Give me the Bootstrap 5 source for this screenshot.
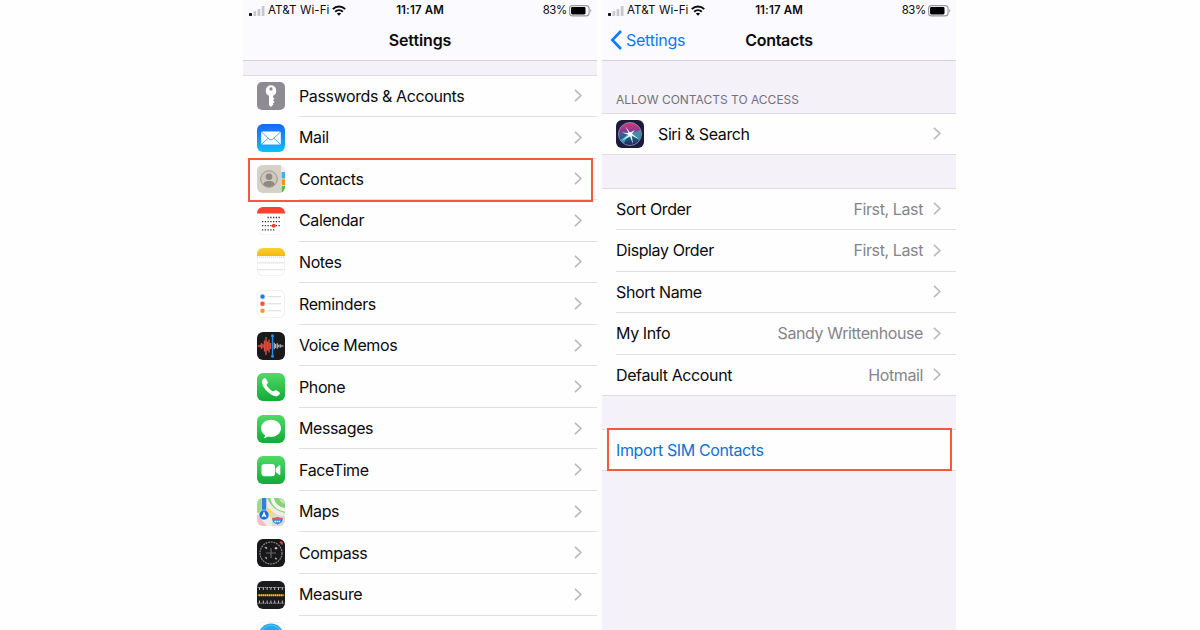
<!DOCTYPE html>
<html lang="en">
<head>
<meta charset="utf-8">
<title>Settings – Contacts</title>
<link href="https://cdn.jsdelivr.net/npm/bootstrap@5.3.0/dist/css/bootstrap.min.css" rel="stylesheet">
<script src="https://cdn.jsdelivr.net/npm/bootstrap@5.3.0/dist/js/bootstrap.bundle.min.js"></script>
<style>
body{font-family:Inter,"Liberation Sans",sans-serif;background:#fefefe;color:#0b0b0d;width:1200px;height:630px;overflow:hidden}
.stage{padding-left:243px;gap:5px;height:630px}
.phone{width:354px;height:630px;background:#f4f1f8;overflow:hidden}
.topbar{height:61px;background:#fbfafe;border-bottom:1px solid #d3d1d7}
.statusbar{height:20px;font-size:11.6px;line-height:19px}
.carrier{left:6px;top:1px;gap:3px;letter-spacing:.05px}
.clock{left:0;right:0;top:1px;font-weight:600;font-size:11.5px;letter-spacing:.12px}
.power{right:5px;top:1px;gap:2px;font-size:11.4px;letter-spacing:-.3px}
.heading{height:40px;line-height:41px;font-size:16px;font-weight:600;letter-spacing:-.1px}
.heading.tight{letter-spacing:-.28px}
.back{left:8px;top:0;gap:4px;color:#0a7aff;font-size:16px;font-weight:400;height:40px;letter-spacing:-.25px}
.gap-a{height:13.6px}
.gap-b{height:32.5px}
.group{background:#fefefe;border-top:1px solid #dedce2}
.group.closed{border-bottom:1px solid #dedce2}
.line{height:41.54px;font-size:16px;padding-left:14px;letter-spacing:-.39px}
.group.closed .line:last-child{height:40.5px}
.line svg.app{width:28px;height:28px;flex:none;margin-right:14px}
.cell{height:100%;padding-right:15px;border-bottom:1px solid #dfdfe1}
.group.closed .line:last-child .cell{border-bottom:0}
.val{color:#85858a;margin-right:10px}
.frame{border:2px solid #f4593a;pointer-events:none;left:5px;width:345px;height:43px}
.frame-contacts{top:158px;height:44px}
.frame-import{top:428px}
.sect{height:51.5px;padding:0 0 6px 14px;font-size:12px;color:#737278;letter-spacing:0;line-height:15px}
.act{color:#0a73d9}
</style>
</head>
<body>
<svg width="0" height="0" class="position-absolute">
<defs>
<linearGradient id="green" x2="0" y2="1"><stop stop-color="#4fdb65"/><stop offset="1" stop-color="#14a939"/></linearGradient>
<linearGradient id="blue" x2="0" y2="1"><stop stop-color="#1a66f4"/><stop offset="1" stop-color="#12bdfb"/></linearGradient>
<linearGradient id="yellow" x2="0" y2="1"><stop stop-color="#fbd02f"/><stop offset="1" stop-color="#f2b90c"/></linearGradient>
<linearGradient id="siri" x2="0" y2="1"><stop stop-color="#d8386f"/><stop offset=".35" stop-color="#8c3a90"/><stop offset=".6" stop-color="#24658f"/><stop offset="1" stop-color="#272154"/></linearGradient>
<clipPath id="r"><rect width="28" height="28" rx="6"/></clipPath>
<symbol id="chev" viewBox="0 0 8 13"><path d="M1 .8 6.900 6.500 1 12.200" fill="none" stroke="#b9b9bd" stroke-width="1.600"/></symbol>
<symbol id="bars" viewBox="0 0 16 10"><rect y="7" width="3" height="3" rx=".7" fill="#111"/><path d="M4.500 5h2.700v5H4.500zM8.600 3h2.700v7H8.600zM12.800 0h2.700v10h-2.700z" fill="#c7c6cb"/></symbol>
<symbol id="wifi" viewBox="0 0 14 11"><g fill="none" stroke="#0b0b0d" stroke-width="2"><path d="M.8 4.100C4.300.5 9.700.5 13.200 4.100"/><path d="M3.200 6.700c2.200-2.100 5.400-2.100 7.600 0"/></g><path d="M4.900 8.500q2.100-1.600 4.200 0L7 10.700z"/></symbol>
<symbol id="batt" viewBox="0 0 23 12"><rect x=".6" y=".6" width="19.500" height="10.300" rx="3" fill="none" stroke="#99989e" stroke-width="1.100"/><rect x="2" y="2.100" width="14.500" height="7.300" rx="1.300"/><path d="M21.300 3.800q2 1.900 0 3.800z" fill="#99989e"/></symbol>
</defs>
</svg>

<main class="stage d-flex">
<section class="phone position-relative">
  <header class="topbar">
    <div class="statusbar position-relative">
      <div class="carrier position-absolute d-flex align-items-center"><svg width="16" height="10"><use href="#bars"/></svg><span>AT&amp;T Wi-Fi</span><svg width="14" height="11"><use href="#wifi"/></svg></div>
      <div class="clock position-absolute text-center">11:17 AM</div>
      <div class="power position-absolute d-flex align-items-center"><span>83%</span><svg width="23" height="12"><use href="#batt"/></svg></div>
    </div>
    <div class="heading text-center">Settings</div>
  </header>
  <div class="gap-a"></div>
  <div class="group">
    <div class="line d-flex align-items-center"><svg class="app" viewBox="0 0 28 28"><rect width="28" height="28" rx="5" fill="#8e8c92"/><path fill="#fff" fill-rule="evenodd" d="M14 3.300a5.500 5.500 0 0 1 2 10.500v1.500l1.500 1.300-1.500 1.600 1.600 1.700-1.600 1.600.3 1.100-2.300 2.400-2-2.100v-9.100A5.500 5.500 0 0 1 14 3.300m0 2a1.600 1.600 0 1 0 0 3.200 1.600 1.600 0 0 0 0-3.200"/></svg><div class="cell d-flex align-items-center flex-fill"><span class="me-auto">Passwords &amp; Accounts</span><svg width="8" height="13"><use href="#chev"/></svg></div></div>
    <div class="line d-flex align-items-center"><svg class="app" viewBox="0 0 28 28"><rect width="28" height="28" rx="6" fill="url(#blue)"/><rect x="4.200" y="7.600" width="19.600" height="13" rx="1.500" fill="#fff"/><path d="m4.800 8.300 7.600 7q1.600 1.300 3.200 0l7.600-7M4.900 20l6.500-5.900M23.100 20l-6.500-5.900" fill="none" stroke="#389dfb" stroke-width=".9"/></svg><div class="cell d-flex align-items-center flex-fill"><span class="me-auto">Mail</span><svg width="8" height="13"><use href="#chev"/></svg></div></div>
    <div class="line d-flex align-items-center"><svg class="app" viewBox="0 0 28 28"><g clip-path="url(#r)"><path fill="#eee" d="M0 0h28v28H0z"/><path d="M0 0h24v28H0z" fill="#d6d1c7"/><path d="M24.600 7H28v6.500h-3.400z" fill="#45aeea"/><path d="M24.600 14.200H28v6h-3.400z" fill="#fb9020"/><path d="M24.600 21H28v7h-3.400z" fill="#43c258"/></g><circle cx="12" cy="14" r="8.300" fill="#cdc7bd" stroke="#96918a" stroke-width=".9"/><circle cx="12" cy="11.700" r="3.300" fill="#8d8983"/><path d="M6 19.200q1-2.600 4.300-3.100h3.400q3.300.5 4.300 3.100-2.400 2.800-6 2.800t-6-2.800" fill="#8d8983"/></svg><div class="cell d-flex align-items-center flex-fill"><span class="me-auto">Contacts</span><svg width="8" height="13"><use href="#chev"/></svg></div></div>
    <div class="line d-flex align-items-center"><svg class="app" viewBox="0 0 28 28"><rect x=".3" y=".3" width="27.400" height="27.400" rx="6" fill="#fff" stroke="#ececef" stroke-width=".6"/><path d="M0 6.500V6a6 6 0 0 1 6-6h16a6 6 0 0 1 6 6v.5z" fill="#f9412d"/><g stroke="#333" stroke-width="1.300" stroke-dasharray="1.300 1.450" fill="none"><path d="M10.500 10.500h13M5 14.600h18.500M5 18.700h18.500M5 22.800h13"/></g><circle cx="16.800" cy="18.700" r="2" fill="#fa3d2c"/></svg><div class="cell d-flex align-items-center flex-fill"><span class="me-auto">Calendar</span><svg width="8" height="13"><use href="#chev"/></svg></div></div>
    <div class="line d-flex align-items-center"><svg class="app" viewBox="0 0 28 28"><rect x=".3" y=".3" width="27.400" height="27.400" rx="6" fill="#fff" stroke="#e6e6e8" stroke-width=".6"/><path d="M0 8V6a6 6 0 0 1 6-6h16a6 6 0 0 1 6 6v2z" fill="url(#yellow)"/><path d="M0 9.200h28" stroke="#bbb" stroke-width=".8" stroke-dasharray="1 1"/><path d="M.5 14.800h27M.5 21.700h27" stroke="#d3d3dc" stroke-width=".8"/></svg><div class="cell d-flex align-items-center flex-fill"><span class="me-auto">Notes</span><svg width="8" height="13"><use href="#chev"/></svg></div></div>
    <div class="line d-flex align-items-center"><svg class="app" viewBox="0 0 28 28"><rect x=".3" y=".3" width="27.400" height="27.400" rx="6" fill="#fff" stroke="#e8e8eb" stroke-width=".7"/><path d="M10.500 6.700H24M10.500 13.800H24M10.500 20.800H24" stroke="#dadade"/><g stroke-opacity=".3" stroke-width="1.200"><circle cx="5.500" cy="6.700" r="2.100" fill="#217cf5" stroke="#217cf5"/><circle cx="5.500" cy="13.800" r="2.100" fill="#f34f3c" stroke="#f34f3c"/><circle cx="5.500" cy="20.800" r="2.100" fill="#f59a23" stroke="#f59a23"/></g></svg><div class="cell d-flex align-items-center flex-fill"><span class="me-auto">Reminders</span><svg width="8" height="13"><use href="#chev"/></svg></div></div>
    <div class="line d-flex align-items-center"><svg class="app" viewBox="0 0 28 28"><rect width="28" height="28" rx="6" fill="#1a1a1d"/><path d="M.8 14h1.400M3 12.800v2.400M4.500 11v6M6 12.300v3.400M7.500 8.500v11M9 5v18M10.500 9.500v9M12 7.500v13M13.500 11v6" stroke="#dd4a3a" stroke-width="1.400"/><path d="M17.200 10.700v6.600M18.700 12v4M20.200 11.200v5.600M21.700 12.800v2.400M23.200 12.200v3.600M24.500 13.500v1M25.800 13.300v1.400" stroke="#d8d8dc"/><path d="M15.500 3.800v20.400" stroke="#2492e8" stroke-width="1.400"/><circle cx="15.500" cy="3.700" r="1.500" fill="#2492e8"/><circle cx="15.500" cy="24.300" r="1.500" fill="#2492e8"/></svg><div class="cell d-flex align-items-center flex-fill"><span class="me-auto">Voice Memos</span><svg width="8" height="13"><use href="#chev"/></svg></div></div>
    <div class="line d-flex align-items-center"><svg class="app" viewBox="0 0 28 28"><rect width="28" height="28" rx="6" fill="url(#green)"/><path d="M5.300 7.500c.7-1.600 1.800-2.700 2.700-2.400.8.300 2.400 2.800 2.800 3.800.3 1-.1 1.500-1 2.400-.6.7 0 1.600 2.400 4.100 2.700 2.600 3.900 3.400 4.700 2.700.8-.8 1.500-1.200 2.400-.8 1 .4 3.300 2.100 3.600 2.800.4.900-.9 2.300-2.500 2.900-2.800 1-7-1.300-10.600-4.900C6.400 14.600 4.300 10.400 5.300 7.500" fill="#fff"/></svg><div class="cell d-flex align-items-center flex-fill"><span class="me-auto">Phone</span><svg width="8" height="13"><use href="#chev"/></svg></div></div>
    <div class="line d-flex align-items-center"><svg class="app" viewBox="0 0 28 28"><rect width="28" height="28" rx="6" fill="url(#green)"/><path d="M14 4.800c5.700 0 10 3.800 10 8.500s-4.300 8.600-10 8.600q-1.500 0-2.900-.3c-1.200.9-2.800 1.500-4.400 1.500q1.300-1.300 1.400-2.900C5.500 18.600 4 16.100 4 13.300c0-4.700 4.300-8.500 10-8.500" fill="#fff"/></svg><div class="cell d-flex align-items-center flex-fill"><span class="me-auto">Messages</span><svg width="8" height="13"><use href="#chev"/></svg></div></div>
    <div class="line d-flex align-items-center"><svg class="app" viewBox="0 0 28 28"><rect width="28" height="28" rx="6" fill="url(#green)"/><rect x="4.500" y="8" width="13.500" height="12.200" rx="3" fill="#fff"/><path d="m18.700 12.400 3.400-3q1.200-.8 1.200.6v8.200q0 1.300-1.200.5l-3.400-2.800z" fill="#fff"/></svg><div class="cell d-flex align-items-center flex-fill"><span class="me-auto">FaceTime</span><svg width="8" height="13"><use href="#chev"/></svg></div></div>
    <div class="line d-flex align-items-center"><svg class="app" viewBox="0 0 28 28"><g clip-path="url(#r)"><path fill="#eeece5" d="M0 0h28v28H0z"/><path d="M0 0h4v17L0 14z" fill="#9bdb83"/><path d="M10 0h18v15Q16 13 10 0" fill="#87d27a"/><path d="M15 0q2 10 13 12" fill="none" stroke="#f5f6ed" stroke-width="3.500"/><path d="M22 0q1 5 6 6V0z" fill="#bfe6ad"/><path d="m10 9 18 15v4h-7L10 15z" fill="#f8d75d"/><path d="M0 16l10 12H0z" fill="#f3bfc5"/><path d="M14 14q5 4 14 4v10H15z" fill="#d8dccc"/><path d="M4.700 0h4.600v16H4.700z" fill="#2f80e6"/></g><circle cx="7" cy="17" r="5" fill="#1870da" stroke="#fff" stroke-width=".5"/><path d="m7 13.300 2.700 6.200L7 18.300l-2.700 1.200z" fill="#fff"/><path d="M15.500 19.500q2.500.7 5-.8 2.500 1.500 5 .8 2.500 5-5 7.500-7.500-2.500-5-7.500" fill="#368ae1" stroke="#fff" stroke-width=".6"/><path d="M15.500 19.500q2.500.7 5-.8 2.500 1.500 5 .8l.4 1.900H15z" fill="#e95763"/><path d="M17.500 23.400h6" stroke="#fff" stroke-width="1.500" stroke-dasharray="1.500 .6"/></svg><div class="cell d-flex align-items-center flex-fill"><span class="me-auto">Maps</span><svg width="8" height="13"><use href="#chev"/></svg></div></div>
    <div class="line d-flex align-items-center"><svg class="app" viewBox="0 0 28 28"><rect width="28" height="28" rx="6" fill="#18181a"/><circle cx="14" cy="14" r="11" fill="none" stroke="#86868b" stroke-width="1.200" stroke-dasharray="1.900 .8"/><path d="M14 9v10M9 14h10" stroke="#66666a" stroke-width="1.200"/><path d="m7.800 8.300 2.200.2-.6 1.500zM18 8.500h2v1.500h-2zM7.900 18.500h1.700v1.700M18.400 18.500v1.600h1.800" fill="#ddd" stroke="#bbb" stroke-width=".6"/><path d="M22.800 3h2.300v2.500z" fill="#f34835" stroke="#f34835"/></svg><div class="cell d-flex align-items-center flex-fill"><span class="me-auto">Compass</span><svg width="8" height="13"><use href="#chev"/></svg></div></div>
    <div class="line d-flex align-items-center"><svg class="app" viewBox="0 0 28 28"><rect width="28" height="28" rx="6" fill="#1b1b1d"/><path d="M.5 6.500h27M.5 22.200h27" stroke="#aaaab0" stroke-width="1" stroke-dasharray="1.200 .7"/><path d="M2 7.700h24M2 20.800h24" stroke="#bcbcc0" stroke-width="2.700" stroke-dasharray="1 2.800"/><path d="M.5 14.200h27" stroke="#7c6717"/><path d="M1.500 14.200h25" stroke="#f1c329" stroke-width="2" stroke-dasharray="1.500 .5"/></svg><div class="cell d-flex align-items-center flex-fill"><span class="me-auto">Measure</span><svg width="8" height="13"><use href="#chev"/></svg></div></div>
    <div class="line d-flex align-items-center"><svg class="app" viewBox="0 0 28 28"><rect x=".3" y=".3" width="27.400" height="27.400" rx="6" fill="#fff" stroke="#e5e5e8" stroke-width=".6"/><circle cx="14" cy="14" r="12.500" fill="#24a9ee"/><circle cx="14" cy="14" r="10.800" fill="none" stroke="#7dcef5" stroke-width=".7"/></svg></div>
  </div>
  <div class="frame frame-contacts position-absolute"></div>
</section>

<section class="phone position-relative">
  <header class="topbar">
    <div class="statusbar position-relative">
      <div class="carrier position-absolute d-flex align-items-center"><svg width="16" height="10"><use href="#bars"/></svg><span>AT&amp;T Wi-Fi</span><svg width="14" height="11"><use href="#wifi"/></svg></div>
      <div class="clock position-absolute text-center">11:17 AM</div>
      <div class="power position-absolute d-flex align-items-center"><span>83%</span><svg width="23" height="12"><use href="#batt"/></svg></div>
    </div>
    <div class="heading tight text-center position-relative">Contacts
      <div class="back position-absolute d-flex align-items-center"><svg width="12" height="20" viewBox="0 0 12 20"><path d="M11 1 2.300 10 11 19" fill="none" stroke="#0a7aff" stroke-width="2.600"/></svg><span>Settings</span></div>
    </div>
  </header>
  <div class="sect d-flex align-items-end">ALLOW CONTACTS TO ACCESS</div>
  <div class="group closed">
    <div class="line d-flex align-items-center"><svg class="app" viewBox="0 0 28 28"><rect width="28" height="28" rx="6" fill="#1b1b3d"/><circle cx="14" cy="14" r="11.500" fill="url(#siri)" stroke="#8990ac" stroke-width=".9"/><path d="M14 13 4 20q2 3 4 3z" fill="#3fb9d1" opacity=".75"/><path d="m14 14 10-4q2 5-1 10z" fill="#38b6b4" opacity=".6"/><path d="m9.500 6.500 4.500 6 5-2.500-3 3.700 7.500 5.800-7.700-3.800L17 24l-3-7.500-8 4 6.500-5.500L6 12.500l6.500.5z" fill="#d9f7ff"/><circle cx="14" cy="14" r="1.800" fill="#fff"/></svg><div class="cell d-flex align-items-center flex-fill"><span class="me-auto">Siri &amp; Search</span><svg width="8" height="13"><use href="#chev"/></svg></div></div>
  </div>
  <div class="gap-b"></div>
  <div class="group closed">
    <div class="line"><div class="cell d-flex align-items-center"><span class="me-auto">Sort Order</span><span class="val">First, Last</span><svg width="8" height="13"><use href="#chev"/></svg></div></div>
    <div class="line"><div class="cell d-flex align-items-center"><span class="me-auto">Display Order</span><span class="val">First, Last</span><svg width="8" height="13"><use href="#chev"/></svg></div></div>
    <div class="line"><div class="cell d-flex align-items-center"><span class="me-auto">Short Name</span><svg width="8" height="13"><use href="#chev"/></svg></div></div>
    <div class="line"><div class="cell d-flex align-items-center"><span class="me-auto">My Info</span><span class="val">Sandy Writtenhouse</span><svg width="8" height="13"><use href="#chev"/></svg></div></div>
    <div class="line"><div class="cell d-flex align-items-center"><span class="me-auto">Default Account</span><span class="val">Hotmail</span><svg width="8" height="13"><use href="#chev"/></svg></div></div>
  </div>
  <div class="gap-b"></div>
  <div class="group closed"><div class="line d-flex align-items-center act">Import SIM Contacts</div></div>
  <div class="frame frame-import position-absolute"></div>
</section>
</main>
</body>
</html>
